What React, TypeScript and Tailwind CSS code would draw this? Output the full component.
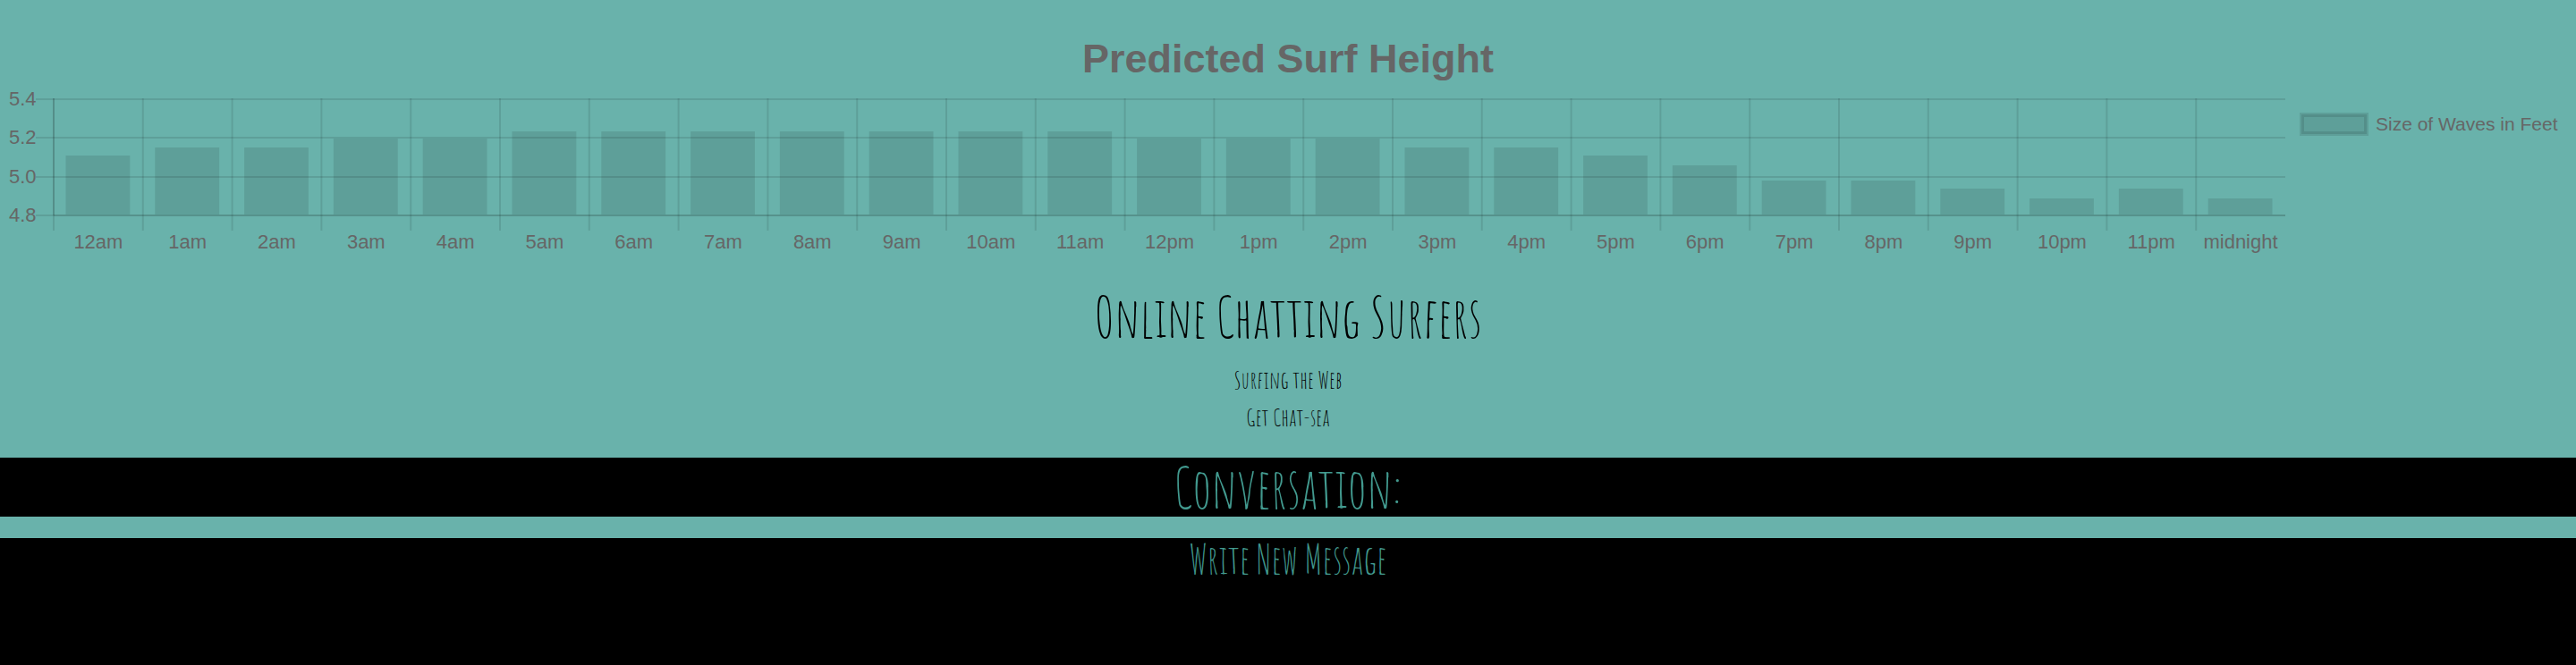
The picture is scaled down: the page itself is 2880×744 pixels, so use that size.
const PLOT_HEIGHT = 130;

const ticks = ["5.4", "5.2", "5.0", "4.8"];
const tickLines = [0, 43, 87, 130];

const hours = [
  { label: "12am", size: 67 },
  { label: "1am", size: 76 },
  { label: "2am", size: 76 },
  { label: "3am", size: 86 },
  { label: "4am", size: 86 },
  { label: "5am", size: 94 },
  { label: "6am", size: 94 },
  { label: "7am", size: 94 },
  { label: "8am", size: 94 },
  { label: "9am", size: 94 },
  { label: "10am", size: 94 },
  { label: "11am", size: 94 },
  { label: "12pm", size: 86 },
  { label: "1pm", size: 86 },
  { label: "2pm", size: 86 },
  { label: "3pm", size: 76 },
  { label: "4pm", size: 76 },
  { label: "5pm", size: 67 },
  { label: "6pm", size: 56 },
  { label: "7pm", size: 39 },
  { label: "8pm", size: 39 },
  { label: "9pm", size: 30 },
  { label: "10pm", size: 19 },
  { label: "11pm", size: 30 },
  { label: "midnight", size: 19 },
];

const step = 100 / hours.length;

function SurfChart() {
  return (
    <figure className="px-2 pt-10 text-left font-['Liberation_Sans',Arial,sans-serif] text-[22px] font-normal leading-6 text-[#666666]">
      <figcaption className="text-center text-[45px] font-bold leading-[52px]">
        Predicted Surf Height
      </figcaption>
      <div className="flex pt-[19px]">
        <div className="-mt-3 flex h-[154px] w-[52px] shrink-0 flex-col justify-between pl-[2px]">
          {ticks.map((tick) => (
            <span key={tick}>{tick}</span>
          ))}
        </div>
        <div className="min-w-0 flex-1">
          <svg className="block h-[147px] w-full overflow-visible" role="img" aria-label="Size of waves in feet by hour">
            {hours.map((hour, i) => (
              <rect
                key={hour.label}
                x={`${(i + 0.135) * step}%`}
                y={PLOT_HEIGHT - hour.size}
                width={`${step * 0.72}%`}
                height={hour.size - 1}
                fill="#000"
                fillOpacity="0.1"
              />
            ))}
            {tickLines.map((y) => (
              <g key={y} stroke="#000" strokeWidth="2" strokeOpacity={y === PLOT_HEIGHT ? 0.18 : 0.1}>
                <line x1="0" x2="100%" y1={y} y2={y} />
                <line x1="-20" x2="0" y1={y} y2={y} strokeOpacity="0.1" />
              </g>
            ))}
            {hours.map((hour, i) => (
              <line
                key={hour.label}
                x1={`${i * step}%`}
                x2={`${i * step}%`}
                y1="-1"
                y2="147"
                stroke="#000"
                strokeWidth="2"
                strokeOpacity="0.1"
              />
            ))}
            <line x1="0" x2="0" y1="-1" y2="130" stroke="#000" strokeWidth="2" strokeOpacity="0.1" />
          </svg>
          <div className="flex pt-px">
            {hours.map((hour) => (
              <span key={hour.label} className="flex min-w-0 flex-1 justify-center whitespace-nowrap">
                {hour.label}
              </span>
            ))}
          </div>
        </div>
        <div className="flex h-14 w-[317px] shrink-0 items-center gap-2 pl-4">
          <span className="h-[26px] w-[77px] border-2 border-black/10 bg-black/10 bg-clip-padding shadow-[inset_0_0_0_3px_rgba(0,0,0,0.1)]" />
          <span className="whitespace-nowrap text-[21px]">Size of Waves in Feet</span>
        </div>
      </div>
    </figure>
  );
}

export default function App() {
  return (
    <main className="flex min-h-screen flex-col bg-[#69b2ab] text-center font-['Amatic_SC',sans-serif] font-normal text-black">
      <SurfChart />
      <header className="pt-8">
        <h1 className="text-[62px] leading-[78px]">Online Chatting Surfers</h1>
        <div className="pt-[11px] text-[27px] leading-[42px]">
          <p>Surfing the Web</p>
          <p>Get Chat-sea</p>
        </div>
      </header>
      <section className="mt-6 bg-black text-[#429a8f]">
        <h2 className="text-[62px] leading-[66px]">Conversation:</h2>
      </section>
      <section className="mt-6 grow bg-black text-[#429a8f]">
        <h3 className="text-[44px] leading-[46px]">Write New Message</h3>
      </section>
    </main>
  );
}
